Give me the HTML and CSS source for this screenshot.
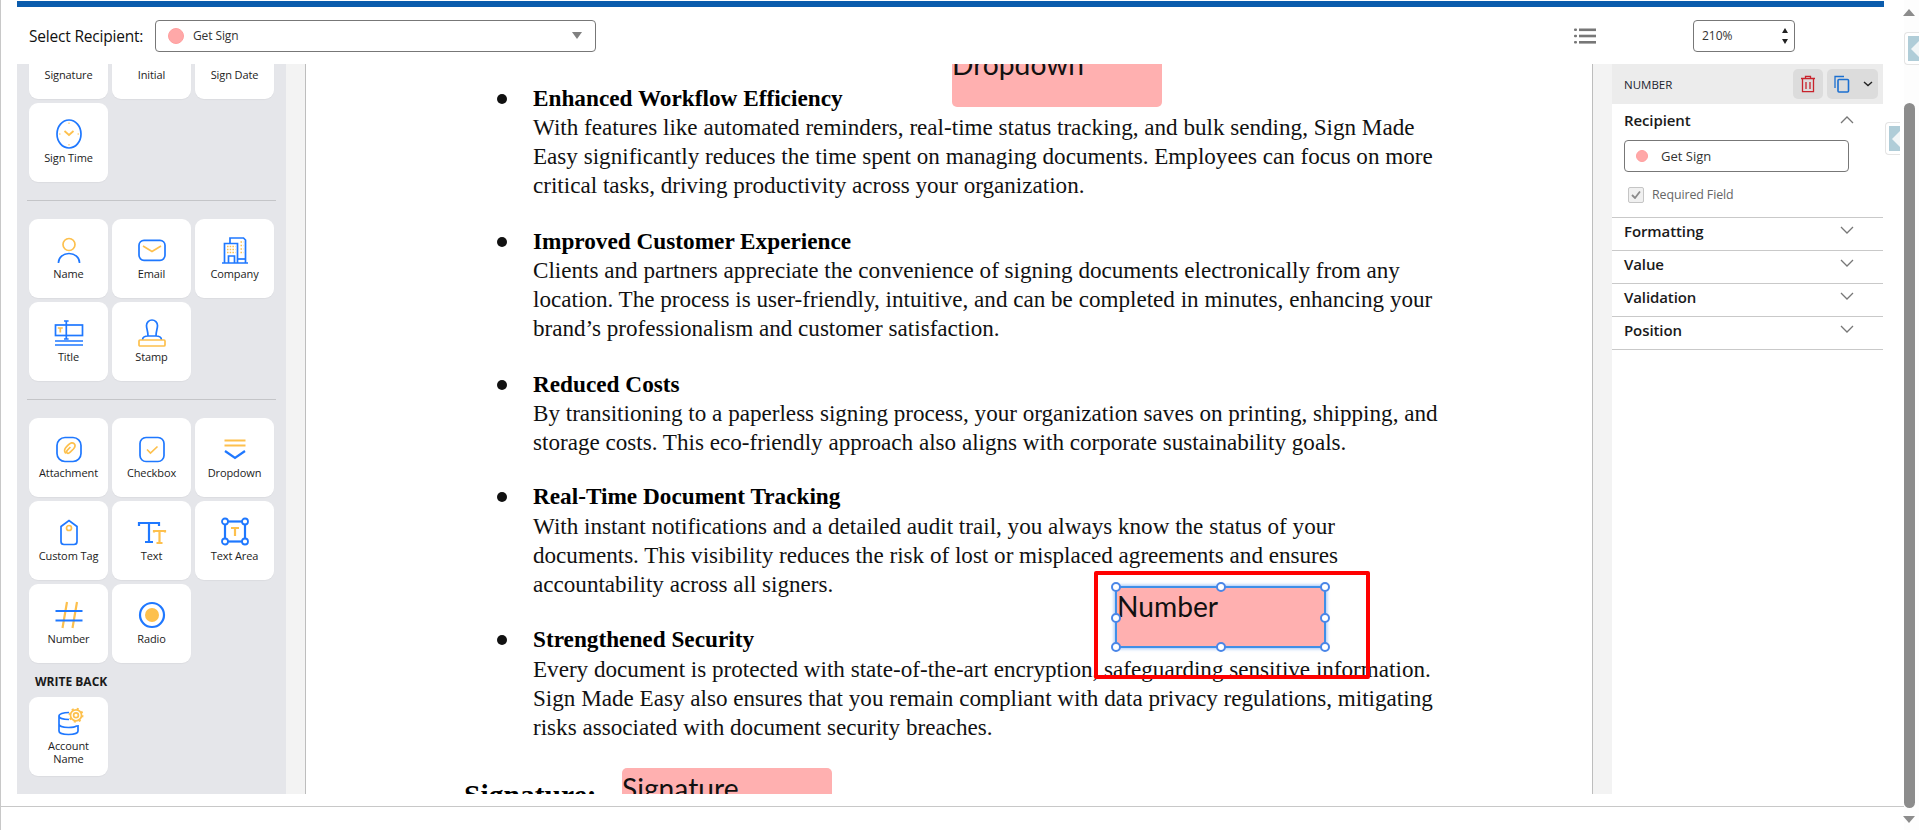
FILE: index.html
```html
<!DOCTYPE html>
<html lang="en">
<head>
<meta charset="utf-8">
<title>Sign Made Easy - Template Editor</title>
<link rel="stylesheet" href="styles.css">
</head>
<body>
<div class="app">
  <div class="workspace">
    <div class="workrow">
      <div class="frame">
        <div class="brandbar"></div>
        <header class="toolbar">
          <span class="toolbar-label">Select Recipient:</span>
          <div class="recipient-select">
            <span class="dot dot-large"></span>
            <span class="recipient-name">Get Sign</span>
            <span class="caret"></span>
          </div>
          <svg class="list-icon" width="22" height="16" viewBox="0 0 22 16"><g fill="#777"><rect x="0" y="0.5" width="3" height="2.6" rx="1"/><rect x="0" y="6.7" width="3" height="2.6" rx="1"/><rect x="0" y="13" width="3" height="2.6" rx="1"/><rect x="5" y="0.5" width="17" height="2.6"/><rect x="5" y="6.7" width="17" height="2.6"/><rect x="5" y="13" width="17" height="2.6"/></g></svg>
          <div class="zoom-box">
            <span>210%</span>
            <span class="spin"><i class="spin-up"></i><i class="spin-down"></i></span>
          </div>
        </header>
        <div class="main">
          <aside class="palette">
            <div class="palette-scroll">
              <div class="tile-grid">
                <div class="tile"><div class="icon-slot"></div><span class="tile-label">Signature</span></div>
                <div class="tile"><div class="icon-slot"></div><span class="tile-label">Initial</span></div>
                <div class="tile"><div class="icon-slot"></div><span class="tile-label">Sign Date</span></div>
                <div class="tile">
                  <svg class="tile-icon" viewBox="0 0 30 30"><ellipse class="b" cx="15" cy="15" rx="12" ry="14"/><path class="y" d="M10.5 12 15 16l4.5-4"/><path class="y thin" d="M15 3.5v1.5M15 25v1.5M5 15h1.500M23.500 15H25"/></svg>
                  <span class="tile-label">Sign Time</span>
                </div>
              </div>
              <hr class="palette-rule">
              <div class="tile-grid">
                <div class="tile">
                  <svg class="tile-icon" viewBox="0 0 30 30"><circle class="y" cx="15" cy="9.5" r="6"/><path class="b" d="M4.5 28v-.5a10.500 9 0 0 1 21 0v.5"/></svg>
                  <span class="tile-label">Name</span>
                </div>
                <div class="tile">
                  <svg class="tile-icon" viewBox="0 0 30 30"><rect class="b" x="2" y="5.300" width="26" height="20" rx="5"/><path class="y" d="M6 11l9 5.500 9-5.500"/></svg>
                  <span class="tile-label">Email</span>
                </div>
                <div class="tile">
                  <svg class="tile-icon" viewBox="0 0 30 30"><path class="b" d="M2 28h26M4.500 28V8.500h13V28M10 8.500V3h13.500l2 2v23M8.500 28v-7h6v7"/><path class="y dots" d="M7 11.500h8.500M7 14.500h8.500M7 17.500h8.500M20.500 7h3M20.500 10.500h3M20.500 14h3M20.500 17.500h3"/><path class="b" d="M18 24h7"/></svg>
                  <span class="tile-label">Company</span>
                </div>
                <div class="tile">
                  <svg class="tile-icon" viewBox="0 0 30 30"><rect class="b" x="1.500" y="7" width="27" height="10.500"/><path class="b" d="M12.300 3v18M10 3h4.600M10 21h4.600M1 23h28M1 27h28"/><path class="y" d="M3.800 10h5M6.300 10v4.500"/></svg>
                  <span class="tile-label">Title</span>
                </div>
                <div class="tile">
                  <svg class="tile-icon" viewBox="0 0 30 30"><path class="b" d="M11 18c0-5-1.500-7-1.500-10.500a5.500 5.500 0 0 1 11 0C20.500 11 19 13 19 18M5.500 22c0-2.500 2.500-4 5.500-4h8c3 0 5.500 1.500 5.500 4"/><rect class="y" x="2" y="22" width="26" height="6" rx="1"/></svg>
                  <span class="tile-label">Stamp</span>
                </div>
              </div>
              <hr class="palette-rule">
              <div class="tile-grid">
                <div class="tile">
                  <svg class="tile-icon" viewBox="0 0 30 30"><rect class="b" x="3" y="3.500" width="24" height="24" rx="8"/><path class="y" d="M11.800 19.500c-2-2-1.500-4.500.8-6.800l2-2c2-2 4-2.500 5.500-1s1 3.500-.7 5.300l-3.200 3.200c-1.200 1.200-2.400 1.500-3.200.7s-.4-2 .7-3.100l2.700-2.800"/></svg>
                  <span class="tile-label">Attachment</span>
                </div>
                <div class="tile">
                  <svg class="tile-icon" viewBox="0 0 30 30"><rect class="b" x="3" y="3.500" width="24" height="24" rx="6"/><path class="y" d="M10 15.500l3.500 3.500 7-6.500"/></svg>
                  <span class="tile-label">Checkbox</span>
                </div>
                <div class="tile">
                  <svg class="tile-icon" viewBox="0 0 30 30"><path class="y w2" d="M4.500 6.500h21M4.500 11.500h21"/><path class="b w2" d="M5 17l10 7 10-7"/></svg>
                  <span class="tile-label">Dropdown</span>
                </div>
                <div class="tile">
                  <svg class="tile-icon" viewBox="0 0 30 30"><path class="b" d="M7 9.500 15 3.500l8 6v15a3 3 0 0 1-3 3h-10a3 3 0 0 1-3-3z"/><circle class="y" cx="15" cy="11" r="2.500"/></svg>
                  <span class="tile-label">Custom Tag</span>
                </div>
                <div class="tile">
                  <svg class="tile-icon" viewBox="0 0 30 30"><path class="b w2" d="M2 9V6h20v3M12 6v19M8 25h8"/><path class="y w2" d="M17 15.500v-1.500h11v1.500M22.500 14v12M19.500 26h6"/></svg>
                  <span class="tile-label">Text</span>
                </div>
                <div class="tile">
                  <svg class="tile-icon" viewBox="0 0 30 30"><rect class="b w2" x="5" y="4.500" width="20" height="20"/><g class="handle-dots"><circle cx="5" cy="4.500" r="3"/><circle cx="25" cy="4.500" r="3"/><circle cx="5" cy="24.500" r="3"/><circle cx="25" cy="24.500" r="3"/></g><path class="y w2" d="M11 11h8M15 11v8"/></svg>
                  <span class="tile-label">Text Area</span>
                </div>
                <div class="tile">
                  <svg class="tile-icon" viewBox="0 0 30 30"><path class="y w2" d="M13 2 8.500 28M23 2 18.500 28"/><path class="b w2" d="M1.500 11h27M1.500 20.500h27"/></svg>
                  <span class="tile-label">Number</span>
                </div>
                <div class="tile">
                  <svg class="tile-icon" viewBox="0 0 30 30"><circle class="b w2" cx="15" cy="15" r="12"/><circle class="fill-y" cx="15" cy="15" r="7"/></svg>
                  <span class="tile-label">Radio</span>
                </div>
              </div>
              <h3 class="palette-heading">WRITE BACK</h3>
              <div class="tile-grid">
                <div class="tile tile-tall">
                  <svg class="tile-icon" viewBox="0 0 30 30"><path class="b" d="M15 6.500C9 6.500 5 8 5 10s4 3.500 10 3.500M5 10v15c0 2 4 3.500 9.500 3.500S24 27 24 25v-6M5 18c0 2 4 3.500 9.500 3.500 4 0 7-.7 8.500-1.700"/><circle class="y" cx="22" cy="9.300" r="2.400"/><circle class="y" cx="22" cy="9.300" r="5.500"/><circle class="gear" cx="22" cy="9.300" r="6.500"/></svg>
                  <span class="tile-label">Account<br>Name</span>
                </div>
              </div>
            </div>
          </aside>
          <div class="page-gutter"></div>
          <section class="doc">
            <ul class="doc-list">
              <li><strong>Enhanced Workflow Efficiency</strong><br>With features like automated reminders, real-time status tracking, and bulk sending, Sign Made<br>Easy significantly reduces the time spent on managing documents. Employees can focus on more<br>critical tasks, driving productivity across your organization.</li>
              <li><strong>Improved Customer Experience</strong><br>Clients and partners appreciate the convenience of signing documents electronically from any<br>location. The process is user-friendly, intuitive, and can be completed in minutes, enhancing your<br>brand’s professionalism and customer satisfaction.</li>
              <li class="short"><strong>Reduced Costs</strong><br>By transitioning to a paperless signing process, your organization saves on printing, shipping, and<br>storage costs. This eco-friendly approach also aligns with corporate sustainability goals.</li>
              <li><strong>Real-Time Document Tracking</strong><br>With instant notifications and a detailed audit trail, you always know the status of your<br>documents. This visibility reduces the risk of lost or misplaced agreements and ensures<br>accountability across all signers.</li>
              <li><strong>Strengthened Security</strong><br>Every document is protected with state-of-the-art encryption, safeguarding sensitive information.<br>Sign Made Easy also ensures that you remain compliant with data privacy regulations, mitigating<br>risks associated with document security breaches.</li>
            </ul>
            <p class="signature-label">Signature:</p>
            <div class="field field-dropdown">Dropdown</div>
            <div class="field field-signature">Signature</div>
            <div class="field field-number">Number
              <i class="h h-tl"></i><i class="h h-tc"></i><i class="h h-tr"></i><i class="h h-ml"></i><i class="h h-mr"></i><i class="h h-bl"></i><i class="h h-bc"></i><i class="h h-br"></i>
            </div>
            <div class="annotation"></div>
          </section>
          <div class="page-gutter page-gutter-right"></div>
          <aside class="props">
            <div class="props-head">
              <span class="props-title">NUMBER</span>
              <button class="icon-btn btn-delete" type="button" aria-label="Delete">
                <svg width="16" height="18" viewBox="0 0 16 18"><path d="M1 3.500h14M5.500 3.500V1.300h5v2.200M2.500 3.500v13.200h11V3.500M6 7v7M10 7v7" fill="none" stroke="#c8232c" stroke-width="1.300"/></svg>
              </button>
              <button class="icon-btn btn-copy" type="button" aria-label="Copy">
                <svg width="16" height="18" viewBox="0 0 16 18"><path d="M1 13V1.500h9" fill="none" stroke="#1b6fd0" stroke-width="1.300"/><rect x="4" y="4.500" width="10.500" height="12.500" rx="1" fill="none" stroke="#1b6fd0" stroke-width="1.600"/></svg>
                <svg width="10" height="6" viewBox="0 0 10 6"><path d="M1 1l4 3.500L9 1" fill="none" stroke="#222" stroke-width="1.400"/></svg>
              </button>
            </div>
            <div class="section section-open">
              <div class="section-head"><span>Recipient</span><svg class="chev" width="14" height="8" viewBox="0 0 14 8"><path d="M1 7l6-6 6 6" fill="none" stroke="#777" stroke-width="1.300"/></svg></div>
              <div class="recipient-field"><span class="dot"></span><span>Get Sign</span></div>
              <label class="required"><span class="checkbox"><svg width="10" height="9" viewBox="0 0 10 9"><path d="M1 5l3 3 5-6.500" fill="none" stroke="#8a8a8a" stroke-width="1.800"/></svg></span>Required Field</label>
            </div>
            <div class="section section-closed"><div class="section-head"><span>Formatting</span><svg class="chev" width="14" height="8" viewBox="0 0 14 8"><path d="M1 1l6 6 6-6" fill="none" stroke="#777" stroke-width="1.300"/></svg></div></div>
            <div class="section section-closed"><div class="section-head"><span>Value</span><svg class="chev" width="14" height="8" viewBox="0 0 14 8"><path d="M1 1l6 6 6-6" fill="none" stroke="#777" stroke-width="1.300"/></svg></div></div>
            <div class="section section-closed"><div class="section-head"><span>Validation</span><svg class="chev" width="14" height="8" viewBox="0 0 14 8"><path d="M1 1l6 6 6-6" fill="none" stroke="#777" stroke-width="1.300"/></svg></div></div>
            <div class="section section-closed"><div class="section-head"><span>Position</span><svg class="chev" width="14" height="8" viewBox="0 0 14 8"><path d="M1 1l6 6 6-6" fill="none" stroke="#777" stroke-width="1.300"/></svg></div></div>
          </aside>
        </div>
      </div>
    </div>
    <div class="footer"></div>
  </div>
  <div class="scrollbar">
    <i class="arrow-up"></i>
    <div class="thumb"></div>
    <i class="arrow-down"></i>
  </div>
  <div class="side-tab side-tab-outer"><span class="tab-face"></span></div>
  <div class="side-tab side-tab-inner"><span class="tab-face"></span></div>
</div>
</body>
</html>
```
FILE: styles.css
```css
* { box-sizing: border-box; }
html, body { margin: 0; height: 100%; }
body {
  background: #fff;
  overflow: hidden;
  font-family: "Open Sans", "Noto Sans", sans-serif;
  color: #111;
}
.app { display: flex; height: 830px; position: relative; }
.workspace {
  width: 1904px;
  display: flex;
  flex-direction: column;
  border-left: 1px solid #c8c8c8;
}
.workrow { height: 806px; padding: 1px 20px 0 16px; }
.frame { width: 1867px; display: flex; flex-direction: column; }
.brandbar { height: 6px; background: #0b5cad; }
.toolbar {
  height: 57px;
  display: flex;
  align-items: center;
  padding: 0 89px 0 12px;
  background: #fff;
  position: relative;
  z-index: 2;
}
.toolbar-label { width: 126px; flex: none; font-size: 15.500px; color: #111; letter-spacing: -0.2px; white-space: nowrap; }
.recipient-select {
  width: 441px;
  height: 32px;
  border: 1px solid #777;
  border-radius: 4px;
  display: flex;
  align-items: center;
  padding: 0 13px 0 12px;
  font-size: 12px;
  color: #333;
}
.dot {
  width: 12px;
  height: 12px;
  border-radius: 50%;
  background: #ffa8a8;
  border: 1px solid #ff9f9f;
  flex: none;
}
.dot-large { width: 16px; height: 16px; }
.recipient-name { margin-left: 9px; flex: 1; letter-spacing: -0.1px; }
.caret {
  width: 0;
  height: 0;
  border-left: 5.500px solid transparent;
  border-right: 5.500px solid transparent;
  border-top: 7px solid #808080;
}
.list-icon { margin-left: auto; margin-right: 97px; }
.zoom-box {
  width: 102px;
  height: 32px;
  border: 1px solid #777;
  border-radius: 4px;
  display: flex;
  align-items: center;
  justify-content: space-between;
  padding: 0 6px 0 8px;
  font-size: 12px;
  color: #333;
}
.spin { display: flex; flex-direction: column; gap: 6px; }
.spin i { display: block; width: 0; height: 0; border-left: 3.500px solid transparent; border-right: 3.500px solid transparent; }
.spin-up { border-bottom: 5px solid #222; }
.spin-down { border-top: 5px solid #222; }

.main { height: 730px; display: flex; overflow: hidden; }
.palette { width: 269px; background: #e5e6ea; overflow: hidden; flex: none; }
.palette-scroll { margin-top: -44px; padding: 0 12px; }
.tile-grid { display: grid; grid-template-columns: repeat(3, 79px); grid-auto-rows: 79px; gap: 4px; }
.tile {
  background: #fff;
  border-radius: 9px;
  display: flex;
  flex-direction: column;
  align-items: center;
  justify-content: center;
  padding-bottom: 3px;
  box-shadow: 0 1px 1px rgba(0,0,0,.04);
}
.tile-tall { padding-bottom: 2px; }
.icon-slot { height: 30px; flex: none; margin-bottom: 2px; }
.tile-icon { width: 30px; height: 30px; flex: none; margin-bottom: 2px; }
.tile-tall .tile-icon { margin-bottom: 3px; }
.tile-label { font-size: 11px; line-height: 13px; text-align: center; color: #1c1c1c; letter-spacing: -0.1px; }
.palette-rule { height: 1px; border: 0; margin: 18px 0 18px -2px; background: #c4c5c8; width: 249px; }
.palette-heading { margin: 11px 0 8px 6px; font-size: 12px; line-height: 15px; font-weight: 700; color: #1a1a1a; }

.b { fill: none; stroke: #1f78ff; stroke-width: 1.700; }
.y { fill: none; stroke: #fdc04d; stroke-width: 1.700; }
.w2 { stroke-width: 2.200; }
.thin { stroke-width: 1; }
.dots { stroke-width: 1.500; stroke-dasharray: 1.500 1.200; }
.fill-y { fill: #fdc04d; }
.handle-dots circle { fill: #fff; stroke: #1f78ff; stroke-width: 1.800; }
.gear { fill: none; stroke: #fdc04d; stroke-width: 2; stroke-dasharray: 2 3.100; }

.page-gutter { width: 19px; background: #f3f3f3; flex: none; }
.doc {
  width: 1288px;
  flex: none;
  position: relative;
  overflow: hidden;
  background: #fff;
  border-left: 1px solid #bdbdbd;
  border-right: 1px solid #bdbdbd;
  padding-top: 19.500px;
  font-family: "Liberation Serif", "Times New Roman", serif;
  font-size: 23.120px;
  line-height: 29.250px;
  color: #111;
}
.doc-list { list-style: none; margin: 0; padding: 0 0 0 227px; white-space: nowrap; }
.doc-list li { margin-bottom: 26px; position: relative; }
.doc-list li.short { margin-bottom: 25px; }
.doc-list li::before {
  content: "";
  position: absolute;
  left: -36px;
  top: 10px;
  width: 10px;
  height: 10px;
  border-radius: 50%;
  background: #111;
}
.doc-list strong { color: #000; font-size: 23.250px; }
.signature-label { margin: 38px 0 0 158px; font-weight: 700; font-size: 29.600px; line-height: 30px; color: #000; }
.field {
  position: absolute;
  width: 210px;
  height: 61px;
  background: #ffb0b0;
  border-radius: 5px;
  font-family: "Lato", "Inter", sans-serif;
  font-size: 28.200px;
  line-height: 40px;
  color: #111;
}
.field-dropdown { left: 646px; top: -18px; line-height: 36px; }
.field-signature { left: 316px; top: 704px; }
.field-number {
  left: 809px;
  top: 522px;
  width: 211px;
  height: 62px;
  border: 2px solid #3f8fe8;
  border-radius: 0;
  box-shadow: 0 0 3px 1px rgba(90,150,240,.55);
  line-height: 36px;
}
.h {
  position: absolute;
  width: 10px;
  height: 10px;
  border-radius: 50%;
  background: #fff;
  border: 2.500px solid #4a86e8;
}
.h-tl { left: -6px; top: -6px; }
.h-tc { left: 99px; top: -6px; }
.h-tr { right: -6px; top: -6px; }
.h-ml { left: -6px; top: 25px; }
.h-mr { right: -6px; top: 25px; }
.h-bl { left: -6px; bottom: -6px; }
.h-bc { left: 99px; bottom: -6px; }
.h-br { right: -6px; bottom: -6px; }
.annotation {
  position: absolute;
  left: 788px;
  top: 507px;
  width: 276px;
  height: 108px;
  border: 4px solid #f00;
  border-radius: 2px;
}

.props { width: 271px; flex: none; background: #fff; }
.props-head {
  height: 40px;
  background: #ececec;
  display: flex;
  align-items: center;
  padding: 0 5px 0 12px;
}
.props-title { flex: 1; font-size: 11.500px; color: #1c2430; }
.icon-btn {
  height: 30px;
  border: 0;
  padding: 0;
  border-radius: 5px;
  background: #dcdcdc;
  display: flex;
  align-items: center;
  justify-content: center;
}
.btn-delete { width: 30px; margin-right: 4px; }
.btn-copy { width: 51px; gap: 13px; padding-left: 2px; }
.section { border-bottom: 1px solid #c9c9c9; padding: 0 29px 0 12px; }
.section-head {
  height: 32px;
  display: flex;
  align-items: center;
  justify-content: space-between;
  font-size: 15px;
  font-weight: 600;
  color: #1a1a1a;
  letter-spacing: -0.1px;
}
.section-closed { padding-bottom: 7px; }
.section-closed .section-head { height: 25px; }
.chev { margin-top: -1px; }
.section-open { height: 114px; }
.recipient-field {
  width: 225px;
  height: 32px;
  margin-top: 4px;
  border: 1px solid #777;
  border-radius: 4px;
  display: flex;
  align-items: center;
  gap: 13px;
  padding-left: 11px;
  font-size: 13px;
  color: #333;
}
.required {
  display: flex;
  align-items: center;
  gap: 8px;
  margin: 14px 0 0 4px;
  font-size: 12.400px;
  color: #666;
  letter-spacing: -0.1px;
}
.checkbox {
  width: 16px;
  height: 16px;
  border: 1px solid #c5c5c5;
  border-radius: 2px;
  background: #f0f0f0;
  display: flex;
  align-items: center;
  justify-content: center;
}
.footer { flex: 1; border-top: 1px solid #c8c8c8; margin-left: -1px; }
.scrollbar {
  width: 15px;
  position: relative;
  background: #fdfdfd;
}
.arrow-up, .arrow-down {
  position: absolute;
  left: -1px;
  width: 0;
  height: 0;
  border-left: 6.500px solid transparent;
  border-right: 6.500px solid transparent;
}
.arrow-up { top: 9px; border-bottom: 7px solid #8c8c8c; }
.arrow-down { top: 816px; border-top: 7px solid #8c8c8c; }
.thumb {
  position: absolute;
  left: 0;
  top: 103px;
  width: 11px;
  height: 705px;
  background: #8c8c8c;
  border-radius: 6px;
}
.side-tab {
  position: absolute;
  height: 33px;
  width: 15px;
  background: #fff;
  border: 1px solid #e4e4e4;
  border-right: 0;
  border-radius: 4px 0 0 4px;
  padding: 3px 0 3px 3px;
}
.side-tab-outer { left: 1904px; top: 32px; }
.side-tab-inner { left: 1885px; top: 122px; }
.tab-face {
  display: block;
  height: 100%;
  background: #b0cdd8;
  position: relative;
  overflow: hidden;
}
.tab-face::after {
  content: "";
  position: absolute;
  right: 0;
  top: 50%;
  margin-top: -8px;
  border-top: 8px solid transparent;
  border-bottom: 8px solid transparent;
  border-right: 8px solid #f2f6f7;
}
```
